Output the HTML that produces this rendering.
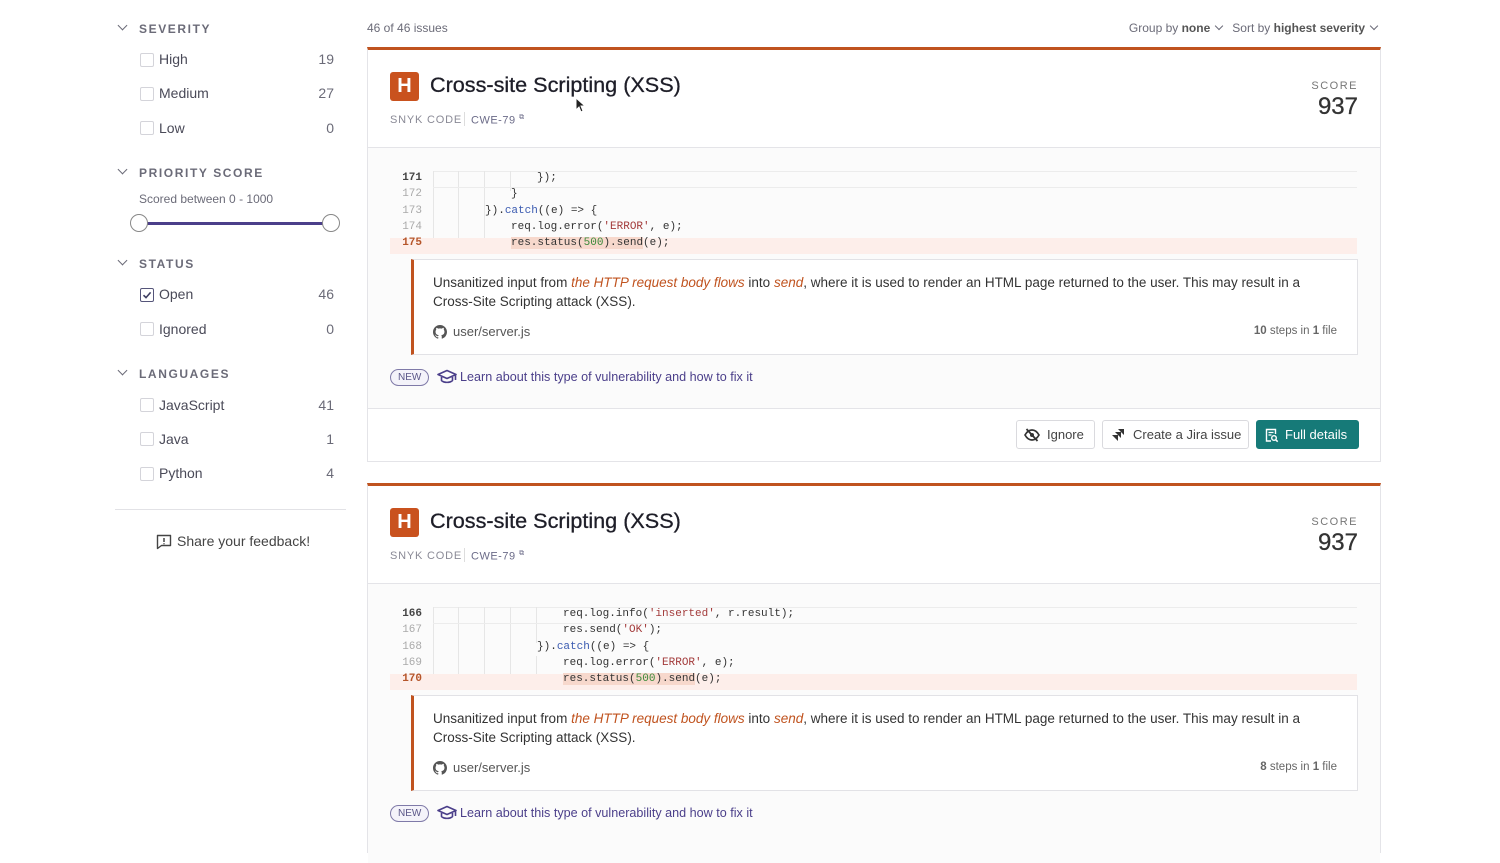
<!DOCTYPE html>
<html><head><meta charset="utf-8"><style>
*{margin:0;padding:0;box-sizing:border-box}
body{width:1500px;height:836px;overflow:hidden;background:#fff;font-family:"Liberation Sans",sans-serif;color:#3a3a48;position:relative}
.a{position:absolute;white-space:nowrap}
.hd{font-size:12px;letter-spacing:1.6px;color:#6b6b78;font-weight:bold}
.chev{width:7px;height:7px;border-right:1.6px solid #6b6b78;border-bottom:1.6px solid #6b6b78;transform:rotate(45deg)}
.ich{display:inline-block;width:6px;height:6px;border-right:1.6px solid #6b6b78;border-bottom:1.6px solid #6b6b78;transform:rotate(45deg);margin-left:6px;position:relative;top:-3px}
.cb{width:14px;height:14px;border:1px solid #d4d4da;border-radius:2px;background:#fff}
.lab{font-size:14px;color:#4a4a58}
.cnt{font-size:14px;color:#6b6b78;text-align:right;width:40px}
.card{position:absolute;left:367px;width:1014px;border:1px solid #e4e4e8;border-top:3px solid #c0531f;background:#fff}
.body{position:absolute;left:0;right:0;top:97px;background:#fbfbfb;border-top:1px solid #e4e4e8}
.code{font-family:"Liberation Mono",monospace;font-size:11px;color:#333}
.ln{position:absolute;left:22px;width:32px;text-align:right;font-family:"Liberation Mono",monospace;font-size:11px;color:#aaa}
.ln.b{color:#444;font-weight:bold}
.ln.r{color:#b5552a;font-weight:bold}
.g{position:absolute;width:1px;background:#e6e6e6}
.desc{position:absolute;left:43px;width:947px;height:96px;background:#fff;border:1px solid #e2e2e6;border-left:3px solid #c0531f}
.o{color:#c0531f;font-style:italic}
.new{position:absolute;left:22px;border:1px solid #7f7aa8;border-radius:10px;font-size:10px;color:#5a5688;padding:2px 7px;background:#f4f3fa}
.btn{position:absolute;height:29px;border:1px solid #dadade;border-radius:3px;background:#fff;font-size:13px;color:#444;line-height:27px}
.s{color:#a33b3b}.n{color:#3a8a3a}.k{color:#3a5ab0}
.title{left:62px;top:22px;font-size:21.6px;color:#1e1e28;-webkit-text-stroke:0.3px #1e1e28}
.dtxt{left:19px;top:13px;font-size:13.5px;line-height:19px;color:#333;white-space:normal;width:892px}
.snyk{left:22px;top:64px;font-size:11px;letter-spacing:.8px;color:#8a8a96}
</style></head><body>

<!-- sidebar -->
<div class="a chev" style="left:119px;top:22px"></div><div class="a hd" style="left:139px;top:22px">SEVERITY</div>
<div class="a cb" style="left:140px;top:53px"></div><div class="a lab" style="left:159px;top:51px">High</div><div class="a cnt" style="left:294px;top:51px">19</div>
<div class="a cb" style="left:140px;top:87px"></div><div class="a lab" style="left:159px;top:85px">Medium</div><div class="a cnt" style="left:294px;top:85px">27</div>
<div class="a cb" style="left:140px;top:121px"></div><div class="a lab" style="left:159px;top:120px">Low</div><div class="a cnt" style="left:294px;top:120px">0</div>

<div class="a chev" style="left:119px;top:166px"></div><div class="a hd" style="left:139px;top:166px">PRIORITY SCORE</div>
<div class="a" style="left:139px;top:192px;font-size:12px;color:#6b6b78">Scored between 0 - 1000</div>
<div class="a" style="left:140px;top:222px;width:190px;height:3px;background:#4b3f8a"></div>
<div class="a" style="left:130px;top:214px;width:18px;height:18px;border-radius:50%;border:1.5px solid #888;background:#fff"></div>
<div class="a" style="left:322px;top:214px;width:18px;height:18px;border-radius:50%;border:1.5px solid #888;background:#fff"></div>

<div class="a chev" style="left:119px;top:257px"></div><div class="a hd" style="left:139px;top:257px">STATUS</div>
<div class="a cb" style="left:140px;top:288px;border-color:#55557a"><svg width="12" height="12" viewBox="0 0 12 12" style="position:absolute;left:0;top:0"><path d="M2.5 6.2 L5 8.6 L9.6 3.4" fill="none" stroke="#3c3c60" stroke-width="1.6"/></svg></div><div class="a lab" style="left:159px;top:286px">Open</div><div class="a cnt" style="left:294px;top:286px">46</div>
<div class="a cb" style="left:140px;top:322px"></div><div class="a lab" style="left:159px;top:321px">Ignored</div><div class="a cnt" style="left:294px;top:321px">0</div>

<div class="a chev" style="left:119px;top:367px"></div><div class="a hd" style="left:139px;top:367px">LANGUAGES</div>
<div class="a cb" style="left:140px;top:398px"></div><div class="a lab" style="left:159px;top:397px">JavaScript</div><div class="a cnt" style="left:294px;top:397px">41</div>
<div class="a cb" style="left:140px;top:432px"></div><div class="a lab" style="left:159px;top:431px">Java</div><div class="a cnt" style="left:294px;top:431px">1</div>
<div class="a cb" style="left:140px;top:467px"></div><div class="a lab" style="left:159px;top:465px">Python</div><div class="a cnt" style="left:294px;top:465px">4</div>
<div class="a" style="left:115px;top:509px;width:231px;height:1px;background:#e2e2e6"></div>
<svg class="a" style="left:156px;top:534px" width="16" height="16" viewBox="0 0 16 16"><path d="M1.5 1.5h13v10h-9l-4 3z" fill="none" stroke="#444" stroke-width="1.4" stroke-linejoin="round"/><path d="M8 4v4M8 9.3v1" stroke="#444" stroke-width="1.5"/></svg>
<div class="a" style="left:177px;top:533px;font-size:14px;color:#444">Share your feedback!</div>

<!-- top bar -->
<div class="a" style="left:367px;top:21px;font-size:12px;color:#6b6b78">46 of 46 issues</div>
<div class="a" style="right:123px;top:21px;font-size:12px;color:#6b6b78">Group by <b style="color:#555">none</b><span class="ich"></span><span style="display:inline-block;width:10px"></span>Sort by <b style="color:#555">highest severity</b><span class="ich"></span></div>

<!-- CARD 1 -->
<div class="card" style="top:47px;height:415px">
 <div class="a" style="left:22px;top:22px;width:29px;height:29px;background:#c9521e;border-radius:3px;color:#fff;font-size:20px;line-height:29px;text-align:center;font-weight:bold">H</div>
 <div class="a title">Cross-site Scripting (XSS)</div>
 <div class="a snyk">SNYK CODE</div>
 <div class="a" style="left:96px;top:62px;width:1px;height:14px;background:#ddd"></div>
 <div class="a" style="left:103px;top:64px;font-size:11px;letter-spacing:.5px;color:#6b6b88">CWE-79 <sup style="font-size:7px">⧉</sup></div>
 <div class="a" style="right:22px;top:30px;font-size:11px;letter-spacing:1.5px;color:#777">SCORE</div>
 <div class="a" style="right:22px;top:43px;font-size:24px;color:#333;-webkit-text-stroke:0.3px #333">937</div>
 <div class="body" style="height:261px">
  <div class="a" style="left:65px;top:23px;width:924px;height:83px;border-top:1px solid #ececec"></div>
  <div class="g" style="left:65px;top:23px;height:83px"></div><div class="g" style="left:90px;top:23px;height:83px"></div><div class="g" style="left:116px;top:23px;height:70px"></div><div class="g" style="left:142px;top:23px;height:20px"></div>
  <div class="a" style="left:22px;top:90px;width:967px;height:16px;background:#fdeeea"></div>
  <div class="a" style="left:65px;top:39px;width:924px;height:1px;background:#ececec"></div>
  <div class="ln b" style="top:24px">171</div><div class="a code" style="left:169px;top:24px">});</div>
  <div class="ln" style="top:40px">172</div><div class="a code" style="left:143px;top:40px">}</div>
  <div class="ln" style="top:57px">173</div><div class="a code" style="left:117px;top:57px">}).<span class="k">catch</span>((e) =&gt; {</div>
  <div class="ln" style="top:73px">174</div><div class="a code" style="left:143px;top:73px">req.log.error(<span class="s">'ERROR'</span>, e);</div>
  <div class="ln r" style="top:89px">175</div><div class="a code" style="left:143px;top:89px"><span style="background:#f7d8cc">res.status(<span class="n">500</span>).send</span>(e);</div>
  <div class="desc" style="top:111px">
   <div class="a dtxt">Unsanitized input from <span class="o">the HTTP request body flows</span> into <span class="o">send</span>, where it is used to render an HTML page returned to the user. This may result in a Cross-Site Scripting attack (XSS).</div>
   <svg class="a" style="left:19px;top:65px" width="14" height="14" viewBox="0 0 16 16"><path fill="#555" d="M8 0C3.58 0 0 3.58 0 8c0 3.54 2.29 6.53 5.47 7.59.4.07.55-.17.55-.38v-1.33c-2.23.48-2.7-1.07-2.7-1.07-.36-.92-.89-1.17-.89-1.17-.73-.5.05-.49.05-.49.8.06 1.23.83 1.23.83.71 1.22 1.87.87 2.33.66.07-.52.28-.87.5-1.07-1.78-.2-3.64-.89-3.64-3.95 0-.87.31-1.59.82-2.15-.08-.2-.36-1.02.08-2.12 0 0 .67-.21 2.2.82a7.6 7.6 0 014 0c1.53-1.04 2.2-.82 2.2-.82.44 1.1.16 1.92.08 2.12.51.56.82 1.27.82 2.15 0 3.07-1.87 3.75-3.65 3.95.29.25.54.73.54 1.48v2.2c0 .21.15.46.55.38A8 8 0 0016 8c0-4.42-3.58-8-8-8z"/></svg>
   <div class="a" style="left:39px;top:64px;font-size:13px;color:#555">user/server.js</div>
   <div class="a" style="right:20px;top:65px;font-size:11.5px;color:#666"><b>10</b> steps in <b>1</b> file</div>
  </div>
  <div class="new" style="top:221px">NEW</div>
  <svg class="a" style="left:69px;top:221px" width="20" height="16" viewBox="0 0 20 16"><path d="M1 5.5L10 1.5l9 4-9 4z M4.5 7.3v4.2c2.5 2.5 8.5 2.5 11 0V7.3 M18.5 6v5" fill="none" stroke="#4b3f8a" stroke-width="1.6" stroke-linejoin="round"/></svg>
  <div class="a" style="left:92px;top:222px;font-size:12.6px;color:#4b3f8a">Learn about this type of vulnerability and how to fix it</div>
 </div>
 <div class="a" style="left:0;right:0;top:358px;height:1px;background:#e4e4e8"></div>
 <div class="btn" style="left:648px;top:370px;width:79px;padding-left:30px">Ignore
  <svg class="a" style="left:7px;top:7px" width="16" height="14" viewBox="0 0 16 14"><path d="M1 7c2-3.5 4.5-5 7-5s5 1.5 7 5c-2 3.5-4.5 5-7 5S3 10.5 1 7z" fill="none" stroke="#333" stroke-width="1.7"/><circle cx="8" cy="7" r="2" fill="#333"/><path d="M2.5 1l11 12" stroke="#333" stroke-width="1.8"/></svg></div>
 <div class="btn" style="left:734px;top:370px;width:147px;padding-left:30px">Create a Jira issue
  <svg class="a" style="left:7px;top:7px" width="15" height="15" viewBox="0 0 15 15"><path d="M8 1h6v6zM5 4h6v6zM2 7h6v6z" fill="#333"/></svg></div>
 <div class="btn" style="left:888px;top:370px;width:103px;padding-left:28px;background:#167a78;border-color:#167a78;color:#fff">Full details
  <svg class="a" style="left:8px;top:7px" width="14" height="15" viewBox="0 0 14 15"><path d="M6 13H1.5V1.5h9V6" fill="none" stroke="#fff" stroke-width="1.4"/><path d="M3.5 4.5h5M3.5 7h3" stroke="#fff" stroke-width="1.2"/><circle cx="9" cy="10" r="2.3" fill="none" stroke="#fff" stroke-width="1.4"/><path d="M10.7 11.7l2 2" stroke="#fff" stroke-width="1.5"/></svg></div>
</div>

<!-- CARD 2 -->
<div class="card" style="top:483px;height:370px">
 <div class="a" style="left:22px;top:22px;width:29px;height:29px;background:#c9521e;border-radius:3px;color:#fff;font-size:20px;line-height:29px;text-align:center;font-weight:bold">H</div>
 <div class="a title">Cross-site Scripting (XSS)</div>
 <div class="a snyk">SNYK CODE</div>
 <div class="a" style="left:96px;top:62px;width:1px;height:14px;background:#ddd"></div>
 <div class="a" style="left:103px;top:64px;font-size:11px;letter-spacing:.5px;color:#6b6b88">CWE-79 <sup style="font-size:7px">⧉</sup></div>
 <div class="a" style="right:22px;top:30px;font-size:11px;letter-spacing:1.5px;color:#777">SCORE</div>
 <div class="a" style="right:22px;top:43px;font-size:24px;color:#333;-webkit-text-stroke:0.3px #333">937</div>
 <div class="body" style="height:280px">
  <div class="a" style="left:65px;top:23px;width:924px;height:83px;border-top:1px solid #ececec"></div>
  <div class="g" style="left:65px;top:23px;height:83px"></div><div class="g" style="left:90px;top:23px;height:83px"></div><div class="g" style="left:116px;top:23px;height:70px"></div><div class="g" style="left:142px;top:23px;height:70px"></div><div class="g" style="left:168px;top:23px;height:36px"></div><div class="g" style="left:168px;top:72px;height:20px"></div>
  <div class="a" style="left:22px;top:90px;width:967px;height:16px;background:#fdeeea"></div>
  <div class="a" style="left:65px;top:39px;width:924px;height:1px;background:#ececec"></div>
  <div class="ln b" style="top:24px">166</div><div class="a code" style="left:195px;top:24px">req.log.info(<span class="s">'inserted'</span>, r.result);</div>
  <div class="ln" style="top:40px">167</div><div class="a code" style="left:195px;top:40px">res.send(<span class="s">'OK'</span>);</div>
  <div class="ln" style="top:57px">168</div><div class="a code" style="left:169px;top:57px">}).<span class="k">catch</span>((e) =&gt; {</div>
  <div class="ln" style="top:73px">169</div><div class="a code" style="left:195px;top:73px">req.log.error(<span class="s">'ERROR'</span>, e);</div>
  <div class="ln r" style="top:89px">170</div><div class="a code" style="left:195px;top:89px"><span style="background:#f7d8cc">res.status(<span class="n">500</span>).send</span>(e);</div>
  <div class="desc" style="top:111px">
   <div class="a dtxt">Unsanitized input from <span class="o">the HTTP request body flows</span> into <span class="o">send</span>, where it is used to render an HTML page returned to the user. This may result in a Cross-Site Scripting attack (XSS).</div>
   <svg class="a" style="left:19px;top:65px" width="14" height="14" viewBox="0 0 16 16"><path fill="#555" d="M8 0C3.58 0 0 3.58 0 8c0 3.54 2.29 6.53 5.47 7.59.4.07.55-.17.55-.38v-1.33c-2.23.48-2.7-1.07-2.7-1.07-.36-.92-.89-1.17-.89-1.17-.73-.5.05-.49.05-.49.8.06 1.23.83 1.23.83.71 1.22 1.87.87 2.33.66.07-.52.28-.87.5-1.07-1.78-.2-3.64-.89-3.64-3.95 0-.87.31-1.59.82-2.15-.08-.2-.36-1.02.08-2.12 0 0 .67-.21 2.2.82a7.6 7.6 0 014 0c1.53-1.04 2.2-.82 2.2-.82.44 1.1.16 1.92.08 2.12.51.56.82 1.27.82 2.15 0 3.07-1.87 3.75-3.65 3.95.29.25.54.73.54 1.48v2.2c0 .21.15.46.55.38A8 8 0 0016 8c0-4.42-3.58-8-8-8z"/></svg>
   <div class="a" style="left:39px;top:64px;font-size:13px;color:#555">user/server.js</div>
   <div class="a" style="right:20px;top:65px;font-size:11.5px;color:#666"><b>8</b> steps in <b>1</b> file</div>
  </div>
  <div class="new" style="top:221px">NEW</div>
  <svg class="a" style="left:69px;top:221px" width="20" height="16" viewBox="0 0 20 16"><path d="M1 5.5L10 1.5l9 4-9 4z M4.5 7.3v4.2c2.5 2.5 8.5 2.5 11 0V7.3 M18.5 6v5" fill="none" stroke="#4b3f8a" stroke-width="1.6" stroke-linejoin="round"/></svg>
  <div class="a" style="left:92px;top:222px;font-size:12.6px;color:#4b3f8a">Learn about this type of vulnerability and how to fix it</div>
 </div>
</div>

<!-- cursor -->
<svg class="a" style="left:575px;top:97px" width="10" height="16" viewBox="0 0 10 16"><path d="M1 1v12l3-3 2 5 2-1-2-5h4z" fill="#222" stroke="#fff" stroke-width="1"/></svg>
</body></html>
